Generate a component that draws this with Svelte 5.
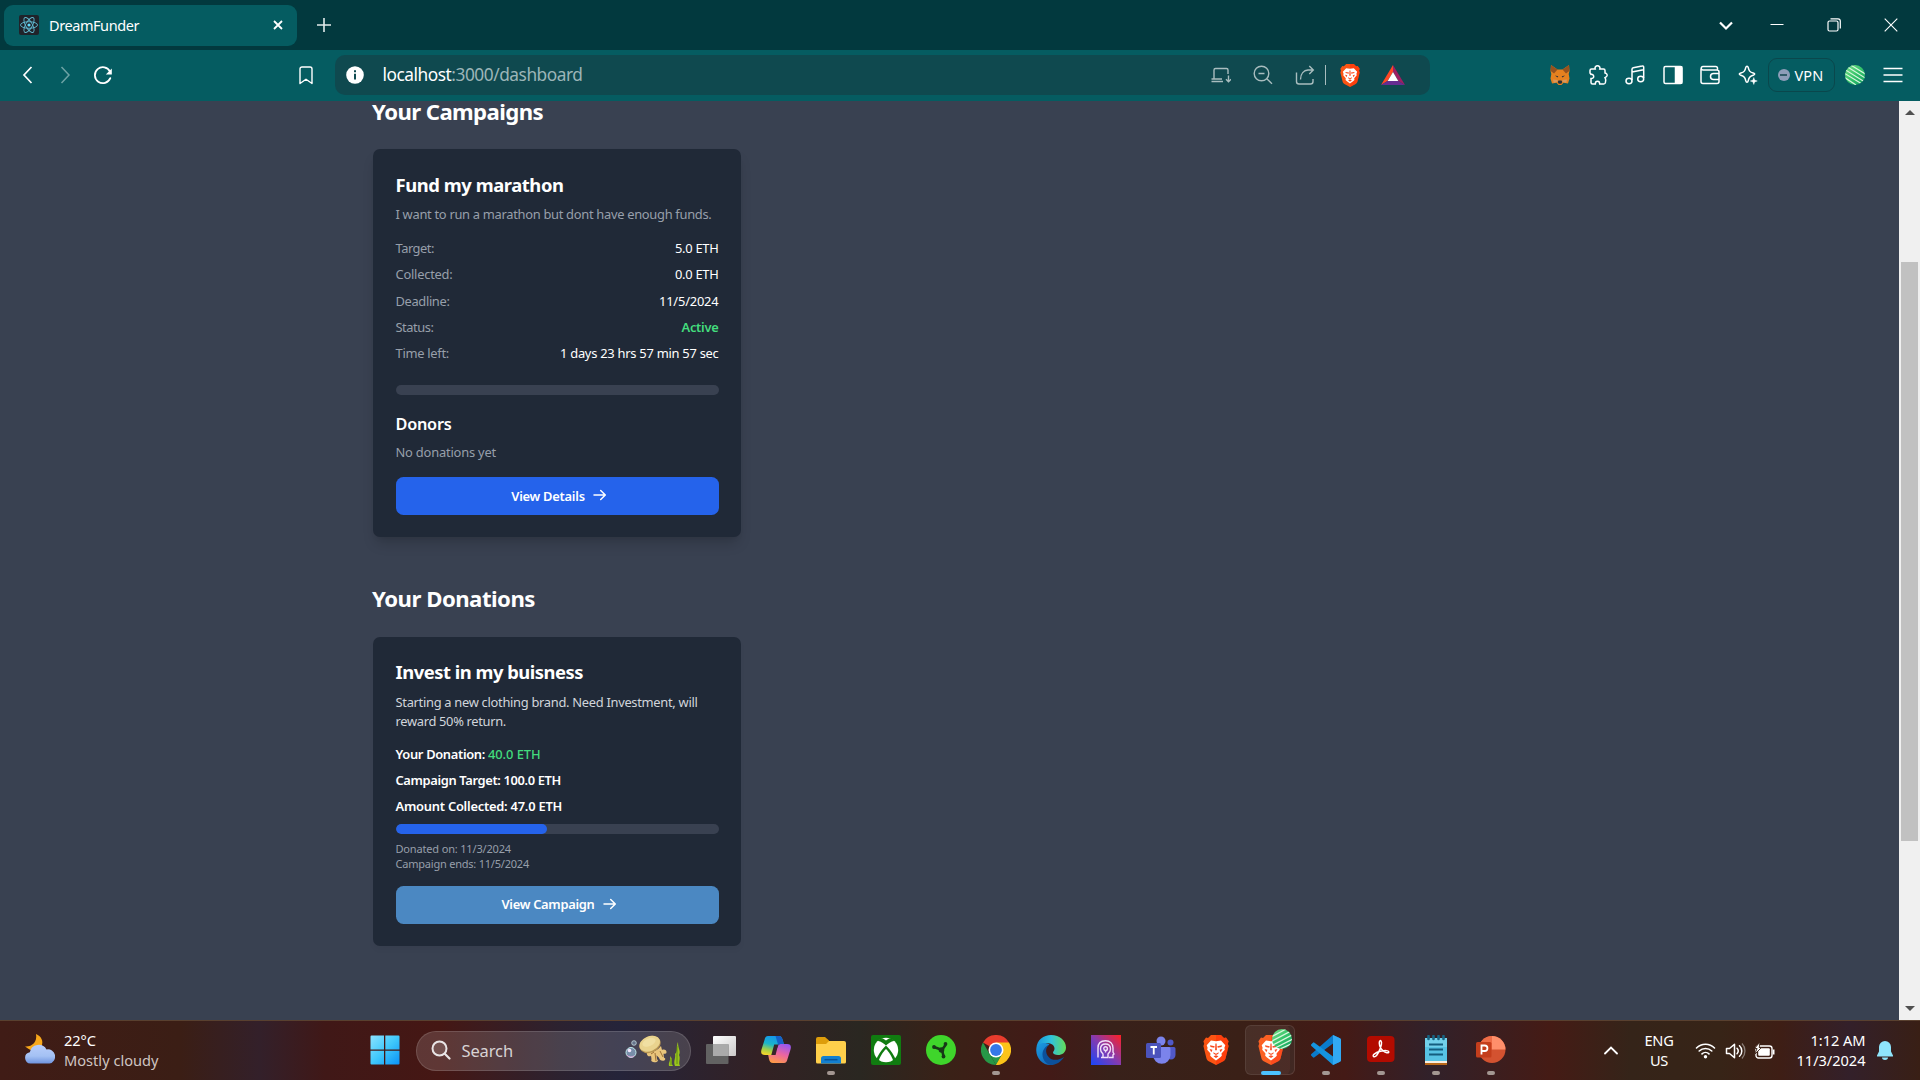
<script>
  const details = [
    { label: 'Target:', lw: 38.5, value: '5.0 ETH', vw: 43.5 },
    { label: 'Collected:', lw: 57, value: '0.0 ETH', vw: 43.5 },
    { label: 'Deadline:', lw: 54, value: '11/5/2024', vw: 59.5 },
    { label: 'Status:', lw: 38, value: 'Active', vw: 37, active: true },
    { label: 'Time left:', lw: 53.5, value: '1 days 23 hrs 57 min 57 sec', vw: 158.5 }
  ];
  const progress = (47 / 100) * 100;

  // Tracks a line of text so that it occupies the given width in pixels.
  function fit(node, width) {
    node.style.letterSpacing = '0px';
    const natural = node.getBoundingClientRect().width;
    const count = node.textContent.length;
    node.style.letterSpacing = `${(width - natural) / count}px`;
  }
</script>

{#snippet brave(cls)}
  <svg class={cls} viewBox="0 0 26 30">
    <path d="M8 0h10l3 3 2-.4 2.6 3.6-.8 2.6.8 2.2-3 12.2c-.4 1.4-1.2 2.2-2.3 3L13 30l-7.3-3.8c-1.1-.8-1.9-1.6-2.3-3L.4 11l.8-2.200L.4 6.200 3 2.600l2 .4z" fill="#fb5413" />
    <path d="M13 0h5l3 3 2-.4 2.600 3.600-.8 2.600.8 2.200-3 12.200c-.4 1.400-1.200 2.200-2.300 3L13 30z" fill="#ff2d0a" opacity=".55" />
    <path d="M8 5.500l5 .8 5-.8 4.300 4.700-.9 2.600.4 2-3.300 3.700.3 2.300-1.800 1.600L13 25.500l-4-3.100-1.800-1.600.3-2.300-3.300-3.700.4-2-.9-2.600z" fill="#fff" />
    <path d="M7 10.300l4.700.9-.5 1.500-3.700-.8zM19 10.300l-4.700.9.5 1.500 3.700-.8zM12.400 8.500h1.200l.3 6.500-.9.600-.9-.6zM10.300 17.200l2.700 1.500 2.700-1.500-.3 1.500-2.400 1.200-2.400-1.200zM6.500 14l3 .7-1.200 2.600zM19.500 14l-3 .7 1.200 2.600zM10.500 21.200l2.500-1 2.500 1-2.500 1.800z" fill="#f9481c" />
  </svg>
{/snippet}

{#snippet profile(cls)}
  <svg class={cls} viewBox="0 0 20 20">
    <defs>
      <linearGradient id="pg-{cls}" x1="0" y1="0" x2="1" y2="1"><stop offset="0" stop-color="#7fe08a" /><stop offset=".5" stop-color="#35c46a" /><stop offset="1" stop-color="#119d62" /></linearGradient>
      <clipPath id="pc-{cls}"><circle cx="10" cy="10" r="10" /></clipPath>
    </defs>
    <g clip-path="url(#pc-{cls})">
      <rect width="20" height="20" fill="url(#pg-{cls})" />
      {#if cls === 'mini'}
        <path d="M-1 8L16-1M-1 12.500L21 1M-1 17L21 5.500M1 20L21 10M6 21l15-7" stroke="#d8f7dd" stroke-width="1.200" />
      {:else}
        <path d="M4-1l18 11M1 1l20 12.500M-1 4l20 12.500M-1 8l18 11M-1 12l12 8" stroke="#d8f7dd" stroke-width="1.200" />
      {/if}
    </g>
  </svg>
{/snippet}

{#snippet arrow()}
  <svg class="arrow" viewBox="0 0 14 12"><path d="M1 6h11.200M7.700 1.500L12.300 6 7.700 10.500" fill="none" stroke="#fff" stroke-width="1.500" stroke-linecap="round" stroke-linejoin="round" /></svg>
{/snippet}

<div class="screen">
  <header class="tabs">
    <div class="tab">
      <svg class="favicon" viewBox="0 0 20 20">
        <rect width="20" height="20" rx="2" fill="#20232a" />
        <g fill="none" stroke="#61bcd3" stroke-width=".9"><ellipse cx="10" cy="10" rx="8.500" ry="3.300" /><ellipse cx="10" cy="10" rx="8.500" ry="3.300" transform="rotate(60 10 10)" /><ellipse cx="10" cy="10" rx="8.500" ry="3.300" transform="rotate(120 10 10)" /></g>
        <circle cx="10" cy="10" r="1.600" fill="#61dafb" />
      </svg>
      <span use:fit={90}>DreamFunder</span>
      <svg class="tab-close" viewBox="0 0 10 10"><path d="M1 1l8 8M9 1L1 9" stroke="#fff" stroke-width="1.800" /></svg>
    </div>
    <svg class="plus" viewBox="0 0 14 14"><path d="M7 0v14M0 7h14" stroke="#e3ecec" stroke-width="1.600" /></svg>
    <div class="window-controls">
      <svg viewBox="0 0 14 14"><path d="M1 4.500l6 6 6-6" fill="none" stroke="#fff" stroke-width="2.200" /></svg>
      <svg viewBox="0 0 14 14"><path d="M.5 6.500h13" stroke="#fff" stroke-width="1" /></svg>
      <svg viewBox="0 0 14 14"><rect x="1" y="3" width="10" height="10" rx="1.500" fill="none" stroke="#fff" stroke-width="1.200" /><path d="M3.500.8H11a2.300 2.300 0 012.300 2.300v7.500" fill="none" stroke="#fff" stroke-width="1.200" /></svg>
      <svg viewBox="0 0 14 14"><path d="M.7.7l12.600 12.600M13.300.7L.7 13.300" stroke="#fff" stroke-width="1.100" /></svg>
    </div>
  </header>

  <nav class="toolbar">
    <div class="history">
      <svg viewBox="0 0 20 20"><path d="M13.500 2L6 10l7.500 8" fill="none" stroke="#fff" stroke-width="1.700" /></svg>
      <svg viewBox="0 0 20 20"><path d="M6.500 2L14 10l-7.500 8" fill="none" stroke="#6ea3a5" stroke-width="1.500" /></svg>
      <svg viewBox="0 0 20 20"><path d="M17.300 13.200A8 8 0 1117 6.500" fill="none" stroke="#fff" stroke-width="1.800" stroke-linecap="round" /><path d="M18.800 3.500v6h-6z" fill="#fff" /></svg>
    </div>
    <svg class="bookmark" viewBox="0 0 14 19"><path d="M3 1h8a2 2 0 012 2v14.500l-6-4.200-6 4.200V3a2 2 0 012-2z" fill="none" stroke="#fff" stroke-width="1.400" stroke-linejoin="round" /></svg>
    <div class="address">
      <svg class="info" viewBox="0 0 18 18"><circle cx="9" cy="9" r="8.800" fill="#fff" /><path d="M9 7.700V13.500M9 4.300v2" stroke="#0f4a50" stroke-width="2" /></svg>
      <span class="url" use:fit={200}>localhost<em>:3000/dashboard</em></span>
      <div class="address-tools">
        <svg class="tool" viewBox="0 0 20 20"><path d="M11 14H3V5a1.500 1.500 0 011.500-1.500h11A1.500 1.500 0 0117 5v4M.5 16.500h11.500M.5 14H3M17.500 10.500v6M15 14.200l2.500 2.500 2.500-2.500" /></svg>
        <svg class="tool" viewBox="0 0 20 20"><circle cx="8.500" cy="8.500" r="7.300" /><path d="M13.800 13.800l5.200 5M5.500 8.500h6" /></svg>
        <svg class="tool" viewBox="0 0 20 20"><path d="M1.500 7.500v9A2.500 2.500 0 004 19h11.500a2.500 2.500 0 002.500-2.500V14M5.500 14.500C5.500 8.500 9 5.300 13 5h5M14.300 1l4 4-4 4" /></svg>
        <i class="divider"></i>
        {@render brave('shield')}
        <svg class="bat" viewBox="0 0 24 20"><path d="M12 0L0 20l6.500-4L12 7z" fill="#ff4724" /><path d="M0 20h24l-6.500-4h-11z" fill="#662d91" /><path d="M12 0l12 20-6.500-4L12 7z" fill="#9e1f63" /><path d="M12 7l5.300 9H6.700z" fill="#fff" /></svg>
      </div>
    </div>
    <div class="extensions">
      <svg viewBox="0 0 20 20"><path d="M1 0l6.500 4.500h5L19 0l.5 6-.8 3 .8 4.500-1.500 5-4.500-.7-2 2.200h-3l-2-2.200-4.500.7-1.500-5 .8-4.500-.8-3z" fill="#e5811f" /><path d="M1 0l6.500 4.500L4 8.500.7 6zM19 0l-6.500 4.500L16 8.500 19.300 6z" fill="#96521f" /><path d="M7.700 17l.8-1.500h3l.8 1.500-1 1.700H8.700z" fill="#26303a" /><path d="M5 10.500l3.300.8-.8 1.300zM15 10.500l-3.300.8.8 1.300z" fill="#30313a" /><path d="M3 14.500l4.500.5.200 2-4 .8zM17 14.500l-4.500.5-.2 2 4 .8z" fill="#c9b09b" opacity=".5" /></svg>
      <svg class="line" viewBox="0 0 20 20"><path d="M3.500 4h3.700c-.6-1.800.6-3.200 2.300-3.200S12.400 2.200 11.800 4h3.700A1.500 1.500 0 0117 5.500V8c1.800.5 2.400 1.500 2 2.800-.4 1.200-1.200 1.500-2 1.800.5 1 .8 1.700.7 2.700l-.3 2.200a1.700 1.700 0 01-1.700 1.500h-4c0-1.800-1-2.700-2.200-2.700S7.300 17.200 7.300 19H4.500A1.500 1.500 0 013 17.500v-4c1.700.2 2.700-.8 2.700-2.100S4.700 9.200 3 9.400L2 8V5.500A1.500 1.500 0 013.500 4z" /></svg>
      <svg class="line" viewBox="0 0 20 20"><path d="M7 15V4.200a1.500 1.500 0 011.200-1.400L17 1a1.300 1.300 0 011.700 1.300V13M7 7l11.500-2.300" /><ellipse cx="4" cy="16" rx="3" ry="2.700" /><ellipse cx="15.700" cy="14" rx="3" ry="2.700" /></svg>
      <svg class="line" viewBox="0 0 20 20"><rect x="1" y="1.500" width="18" height="17" rx="1.500" /><path d="M12.500 2h6v16h-6z" fill="#fff" /></svg>
      <svg class="line" viewBox="0 0 20 20"><path d="M17.500 5V3.300A1.800 1.800 0 0015.700 1.500H3a1.750 1.750 0 000 3.500h14a2 2 0 012 2v9.500a2 2 0 01-2 2H3a2 2 0 01-2-2v-13M19 8.500h-5.500a3 3 0 000 6H19z" /></svg>
      <svg class="line" viewBox="0 0 20 20"><path d="M9 1.200c.7 0 1 .5 1.200 1.200.8 3.500 1.500 4.600 5 5.600 2 .6 2 1.600 0 2.300-3.500 1.200-4.200 2-5 5.600-.4 1.700-2 1.700-2.400 0C7 12.300 6.300 11.500 2.800 10.300c-2-.7-2-1.700 0-2.300 3.500-1 4.200-2.100 5-5.600.2-.7.5-1.200 1.200-1.200z" /><path d="M15.800 12.500l.9 2.600 2.600.9-2.600.9-.9 2.600-.9-2.600-2.600-.9 2.600-.9z" fill="#fff" stroke-width=".4" /></svg>
      <div class="vpn"><i></i><span use:fit={29}>VPN</span></div>
      {@render profile('avatar')}
      <svg class="line menu" viewBox="0 0 20 20"><path d="M.5 3.500h19M.5 10h19M.5 16.500h19" /></svg>
    </div>
  </nav>

  <main class="page">
    <div class="content">
      <h2><span use:fit={171}>Your Campaigns</span></h2>
      <article class="card first">
        <h3><span use:fit={168}>Fund my marathon</span></h3>
        <p class="desc muted"><span use:fit={316}>I want to run a marathon but dont have enough funds.</span></p>
        <dl>
          {#each details as row}
            <div class="row">
              <dt use:fit={row.lw}>{row.label}</dt>
              <dd class:active={row.active} use:fit={row.vw}>{row.value}</dd>
            </div>
          {/each}
        </dl>
        <div class="bar"></div>
        <h4><span use:fit={56}>Donors</span></h4>
        <p class="none muted"><span use:fit={100.500}>No donations yet</span></p>
        <button><span use:fit={73.500}>View Details</span>{@render arrow()}</button>
      </article>

      <h2 class="second"><span use:fit={163}>Your Donations</span></h2>
      <article class="card">
        <h3><span use:fit={187.500}>Invest in my buisness</span></h3>
        <p class="desc light"><span use:fit={302}>Starting a new clothing brand. Need Investment, will</span><br /><span use:fit={110.500}>reward 50% return.</span></p>
        <div class="facts">
          <p><span use:fit={92.500}>Your Donation:&nbsp;</span><b use:fit={52.500}>40.0 ETH</b></p>
          <p><span use:fit={165.500}>Campaign Target: 100.0 ETH</span></p>
          <p><span use:fit={166.500}>Amount Collected: 47.0 ETH</span></p>
        </div>
        <div class="bar"><div class="fill" style="width: {progress}%"></div></div>
        <div class="dates muted">
          <p><span use:fit={115.500}>Donated on: 11/3/2024</span></p>
          <p><span use:fit={133.500}>Campaign ends: 11/5/2024</span></p>
        </div>
        <button class="soft"><span use:fit={93}>View Campaign</span>{@render arrow()}</button>
      </article>
    </div>
    <div class="scrollbar">
      <svg viewBox="0 0 10 5"><path d="M0 5l5-5 5 5z" fill="#505050" /></svg>
      <div class="track"><div class="thumb"></div></div>
      <svg viewBox="0 0 10 5"><path d="M0 0l5 5 5-5z" fill="#505050" /></svg>
    </div>
  </main>

  <footer class="taskbar">
    <div class="weather">
      <svg viewBox="0 0 30 30">
        <defs><linearGradient id="cloud" x1="0" y1="0" x2="0" y2="1"><stop offset="0" stop-color="#b8cdfa" /><stop offset=".6" stop-color="#a4c1f4" /><stop offset="1" stop-color="#6f94df" /></linearGradient></defs>
        <path d="M11 0c5 2 8 7 5.500 12C14 17 8 19 0 12.500 7 13 12.500 8 11 0z" fill="#f8a81b" />
        <path d="M5.500 29.500a5.700 5.700 0 01-.7-11.300A9 9 0 0121.500 15.500a7 7 0 013 14z" fill="url(#cloud)" />
      </svg>
      <div class="lines"><span use:fit={32}>22°C</span><span class="dim" use:fit={94.500}>Mostly cloudy</span></div>
    </div>

    <div class="start">
      <svg viewBox="0 0 30 30"><defs><linearGradient id="win" x1="0" y1="0" x2="1" y2="1"><stop offset="0" stop-color="#8be3ff" /><stop offset=".5" stop-color="#40c8fb" /><stop offset="1" stop-color="#0a92f8" /></linearGradient></defs><path d="M.5 1.500A1 1 0 011.500.5H14v14H.5zM15.300.5h13.200a1 1 0 011 1v13H15.300zM.5 15.800H14v13.700H1.500a1 1 0 01-1-1zM15.300 15.800h14.200v12.700a1 1 0 01-1 1H15.300z" fill="url(#win)" /></svg>
    </div>

    <div class="search">
      <svg class="glass" viewBox="0 0 20 20"><circle cx="8.500" cy="8.500" r="7" fill="#ffffff22" stroke="#e9e5e6" stroke-width="2" /><path d="M13.800 13.800l4.700 4.700" stroke="#e9e5e6" stroke-width="2.200" stroke-linecap="round" /></svg>
      <span use:fit={51.500}>Search</span>
      <svg class="sea" viewBox="0 0 56 32">
        <circle cx="6" cy="18.500" r="5" fill="#788eaa" stroke="#bfe8e8" /><circle cx="4.500" cy="16.500" r="1.800" fill="#f5e8ff" /><path d="M2 21a5 5 0 007 1" stroke="#e4a4d8" fill="none" /><circle cx="9" cy="9" r="2.300" fill="#66738b" stroke="#c4dce0" stroke-width=".8" />
        <path d="M21 17c4 2 8 1 12-2l3-3 1 4c2-1 5 0 4.500 2.500-.3 1.500-2 1.500-3 1.200l.5 4c2 0 1.500 3-.5 3-2.500.3-4-1-4.500-3l-2.500-2.500.5 4c2 1 .5 3-2 3s-4.500-1-3.500-3l-.5-3.500c-1.500 1.500-4.500 0-4-2z" fill="#e9c57c" />
        <path d="M30 19l1 8M35 17l3 6M26 20l3-2" stroke="#9b7036" stroke-width="1" />
        <ellipse cx="25" cy="10.500" rx="11" ry="8.200" transform="rotate(-23 25 10.500)" fill="#b99753" />
        <ellipse cx="24.700" cy="9.700" rx="10.700" ry="7.400" transform="rotate(-23 24.700 9.700)" fill="#e9d38e" />
        <ellipse cx="24" cy="8.300" rx="7" ry="3.800" transform="rotate(-23 24 8.300)" fill="#f0dfa2" />
        <path d="M44 32c-1-4 2-5 1-10 4 4 0 6 3 10zM50 32c-2-5 1-8 0-12 3-2 1-8 3-12 0 7 3 9 1 13 2 4-1 7 1 11z" fill="#9ac51c" /><path d="M52 12v18M46 25v6" stroke="#567e12" stroke-width=".8" />
      </svg>
    </div>

    <div class="apps">
      <div class="app"><svg viewBox="0 0 30 30"><defs><linearGradient id="tv" x2="1" y2="1"><stop stop-color="#fff" /><stop offset="1" stop-color="#cbc9c9" /></linearGradient></defs><rect x="7" y="1" width="23" height="20" rx="1" fill="url(#tv)" /><rect y="9" width="22.500" height="20" rx="1" fill="#626262" /><path d="M7 9h15.500v12H7z" fill="#aaa" /></svg></div>
      <div class="app"><svg viewBox="0 0 30 30">
        <defs><linearGradient id="cp1" x1=".6" y1="0" x2=".3" y2="1"><stop stop-color="#1595ed" /><stop offset=".45" stop-color="#1bb5c9" /><stop offset=".75" stop-color="#a1cf48" /><stop offset="1" stop-color="#f4d52d" /></linearGradient><linearGradient id="cp2" x1=".7" y1="0" x2=".3" y2="1"><stop stop-color="#9857f0" /><stop offset=".5" stop-color="#eb65a1" /><stop offset="1" stop-color="#ff9b47" /></linearGradient></defs>
        <path d="M7 1h11c2.500 0 3.300 2 4 5l.8 3H20c-3 0-4 1.500-4.700 4L13 18c-.5 1.500-1.500 2-3 2H4c-3.500 0-4.500-2-3.500-5.500L3.500 5C4 2.500 5 1 7 1z" fill="url(#cp1)" />
        <path d="M23 28H12c-2.500 0-3.300-1.500-4-4l-.8-4H10c3 0 4-1.500 4.700-4L17 11c.5-1.500 1.500-2 3-2h6c3.500 0 4.500 2 3.500 5.500L26.500 24c-.6 2.500-1.500 4-3.500 4z" fill="url(#cp2)" />
        <path d="M14.500 1H18c2.500 0 3.300 2 4 5l.8 3H20c-1 0-2 .3-2.800.9z" fill="#1561c7" />
        <path d="M13.200 9.500h4l-2.600 10.500h-4.300z" fill="#38242a" />
      </svg></div>
      <div class="app running"><svg viewBox="0 0 30 30"><path d="M0 4a2 2 0 012-2h7l4 3.500V10H0z" fill="#dd9d0b" /><path d="M0 9h10l3-3h15a2 2 0 012 2v19a1.500 1.500 0 01-1.500 1.500h-27A1.500 1.500 0 010 27z" fill="#ffd04b" /><path d="M5 28.500v-5a2.500 2.500 0 012.500-2.500h15a2.500 2.500 0 012.500 2.500v5z" fill="#1380d0" /><path d="M8.500 24.700h13" stroke="#08549a" stroke-width="1.500" /></svg></div>
      <div class="app"><svg viewBox="0 0 30 30"><rect width="30" height="30" rx="2" fill="#107c10" /><circle cx="15" cy="15" r="12.200" fill="#fff" /><path d="M6.500 6C11 5 21 15 25 25l-2.500 1.500C20 19 16 15 15 14c-1 1-5 5-7.500 12.500L5 25C9 15 19 5 23.500 6L21 3.500c-3-.8-5 1.500-6 2-1-.5-3-2.800-6-2z" fill="#107c10" /></svg></div>
      <div class="app"><svg viewBox="0 0 30 30"><circle cx="15" cy="15" r="15" fill="#3fd52b" /><path d="M8 12l8 3 3.500-5M16 15l1.500 6" stroke="#173817" stroke-width="2.600" fill="none" /><circle cx="8" cy="12" r="1.900" fill="#173817" /><circle cx="19.500" cy="9" r="1.900" fill="#173817" /><circle cx="17.500" cy="21.500" r="1.900" fill="#173817" /><circle cx="15.500" cy="15" r="2.800" fill="#173817" /></svg></div>
      <div class="app running"><svg viewBox="0 0 30 30"><path d="M15 15L2 7.500A15 15 0 0128 7.500z" fill="#e83c2d" /><path d="M15 7.500h13A15 15 0 0115 30l6.500-11.200z" fill="#fcc419" /><path d="M2 7.500l6.500 11.200L15 30A15 15 0 012 7.500z" fill="#279847" /><path d="M8.500 18.700h13L15 30z" fill="#279847" /><path d="M21.500 18.700L15 30c2 0 5-.5 7-2z" fill="#fcc419" /><circle cx="15" cy="15" r="7.500" fill="#fff" /><circle cx="15" cy="15" r="5.900" fill="#3578e8" /></svg></div>
      <div class="app"><svg viewBox="0 0 30 30"><defs><linearGradient id="ed1" x1="0" x2="1"><stop stop-color="#1794dc" /><stop offset=".5" stop-color="#31c3db" /><stop offset="1" stop-color="#64dc58" /></linearGradient><linearGradient id="ed2" x1="0" y1="0" x2=".7" y2="1"><stop stop-color="#1b9de2" /><stop offset="1" stop-color="#1266b9" /></linearGradient></defs><path d="M.4 13C1 5 7.500 0 15 0c9 0 15 6 15 12.500 0 5-4 7.500-8 7.500-3 0-5-1-5-2.500 0-1 1.500-1.500 1.500-4C18.500 9 13 7.500 9 8.500 4 9.500 1 12 .4 13z" fill="url(#ed1)" /><path d="M.4 13C2 8 9 6.500 13.500 9.500 8 12 8 20 12 25c1.500 2 4 3.500 6 4.500-10 2.500-19-6-17.600-16.500z" fill="url(#ed2)" /><path d="M13.500 9.700c-4 2.300-4.500 8-1 12 3.500 4.300 10 4 15.500.3C25 27 20 30 14.500 30 7 28 5.500 20 7 16c1-3 3.500-5.500 6.500-6.300z" fill="#0c509b" /></svg></div>
      <div class="app"><svg viewBox="0 0 30 30"><defs><linearGradient id="pr" x1="0" y1="1" x2="1" y2="0"><stop stop-color="#1747fa" /><stop offset=".5" stop-color="#853bb0" /><stop offset="1" stop-color="#ff2023" /></linearGradient></defs><rect width="30" height="30" fill="url(#pr)" /><g fill="none" stroke="#f2dff9" stroke-width="1.400"><path d="M7 22.500V13c0-5 3-7.300 7.500-7.300S22 8.500 22 13v4l1 2-1 .8v2.700h-4" /><path d="M10 22.500h7v-3.500c2-1.500 2.500-3 2.500-5 0-3-2-5-5-5s-5 2-5 5c0 2 .5 3.500 2.500 5v3" /><path d="M14.500 17.500v-2c-2 0-2.500-3.700 0-3.700s2.500 3.700 0 3.700" /></g></svg></div>
      <div class="app"><svg viewBox="0 0 30 30"><circle cx="24.500" cy="7.500" r="3" fill="#5059c9" /><path d="M20 12h8a1.500 1.500 0 011.500 1.500V20a4.500 4.500 0 01-9 0z" fill="#5059c9" /><circle cx="15" cy="6" r="4.500" fill="#7b83eb" /><path d="M7 12h16a1.500 1.500 0 011.500 1.500V20A8.500 8.500 0 017 20z" fill="#7b83eb" /><rect y="8" width="15" height="15" rx="1.500" fill="#4b53bc" /><path d="M4.500 12h6.500M7.750 12v7.500" stroke="#fff" stroke-width="1.800" /></svg></div>
      <div class="app">{@render brave('lion')}</div>
      <div class="app current">{@render brave('lion')}<div class="badge">{@render profile('mini')}</div></div>
      <div class="app running"><svg viewBox="0 0 30 30"><path d="M22 0l7 3.200a2 2 0 011 1.700v20.200a2 2 0 01-1 1.700L22 30V8.500L3.500 22.300a1.200 1.200 0 01-1.600 0L.4 20.800a1.200 1.200 0 010-1.700z" fill="#0a7bcc" /><path d="M22 30L.4 10.900a1.200 1.200 0 010-1.700l1.500-1.500a1.200 1.200 0 011.600 0L22 21.500z" fill="#1594df" /><path d="M22 0l7 3.200a2 2 0 011 1.700v20.200a2 2 0 01-1 1.700L22 30z" fill="#32a9f3" /></svg></div>
      <div class="app running"><svg viewBox="0 0 30 30"><rect x="1" y="1" width="27.500" height="26" rx="4" fill="#b30b00" /><path d="M7.500 21.500c-1.500-1.500 2-4 7-5.200s8-.8 8.300.6c.2 1.600-3.600 1-6.300-1.600S12.700 8.500 13.500 6.500s2.500-.5 1.900 2.800c-.7 4.700-5.400 14.500-7.900 12.200z" fill="none" stroke="#fff" stroke-width="1.500" /></svg></div>
      <div class="app running"><svg viewBox="0 0 30 30"><path d="M4 3h22v24H4z" fill="#57c3e4" /><path d="M4 3h22v9H4z" fill="#83d9ef" opacity=".6" /><path d="M4 26h22v2H4z" fill="#f6eee2" /><path d="M4 28h22v2H4z" fill="#b8681a" /><path d="M8 9.500h14M8 14.500h14M8 19.500h14" stroke="#145d7e" stroke-width="1.800" /><path d="M7.500 1v3M12.500 1v3M17.500 1v3M22.500 1v3" stroke="#176584" stroke-width="2.600" stroke-linecap="round" /></svg></div>
      <div class="app running"><svg viewBox="0 0 30 30"><circle cx="16" cy="14.500" r="13.500" fill="#d35230" /><path d="M16 1a13.500 13.500 0 00-13.500 13.500H16z" fill="#ed6c47" /><path d="M16 1a13.500 13.500 0 0113.500 13.500H16z" fill="#ff8f6b" /><rect x="0" y="7" width="15.500" height="15.500" rx="1.500" fill="#c43e1c" /><path d="M5.500 19.500v-9h3.200a2.700 2.700 0 010 5.500H5.500" fill="none" stroke="#fff" stroke-width="1.800" /></svg></div>
    </div>

    <div class="tray">
      <svg class="up" viewBox="0 0 14 9"><path d="M1 7.500l6-6 6 6" fill="none" stroke="#fff" stroke-width="1.800" stroke-linecap="round" /></svg>
      <div class="lines lang"><span use:fit={29}>ENG</span><span use:fit={18}>US</span></div>
      <svg class="status" viewBox="0 0 20 18"><g fill="none" stroke="#fff" stroke-width="1.600" stroke-linecap="round"><path d="M1 6a12.700 12.700 0 0118 0M3.700 9a9 9 0 0112.600 0M6.500 11.900a5 5 0 017 0" /></g><circle cx="10" cy="14.800" r="1.700" fill="#fff" /></svg>
      <svg class="status" viewBox="0 0 20 18"><path d="M1 6.500h3L9 2.200v13.600L4 11.500H1zM11.500 6.300a4 4 0 010 5.400M14 3.800a7 7 0 010 10.400" fill="none" stroke="#fff" stroke-width="1.500" stroke-linejoin="round" stroke-linecap="round" /><path d="M16.500 1.500a11 11 0 010 15" fill="none" stroke="#8a7d76" stroke-width="1.300" /></svg>
      <svg class="status" viewBox="0 0 20 18"><rect x="1.500" y="4" width="16" height="12" rx="2.500" fill="none" stroke="#fff" stroke-width="1.400" /><rect x="3.700" y="6.200" width="11.600" height="7.600" rx="1" fill="#fff" /><path d="M18.200 7.500h1.800v5h-1.800z" fill="#fff" /><path d="M5.500 0L0 6.500h2.600L0 12.500l7-7H4.700z" fill="#fff" stroke="#3a2015" stroke-width=".9" /></svg>
      <div class="lines clock"><span use:fit={55}>1:12 AM</span><span use:fit={69}>11/3/2024</span></div>
      <svg class="bell" viewBox="0 0 16 19"><path d="M8 0a6 6 0 016 6v4.500l2 4c.2.500 0 1-.6 1H.6c-.6 0-.8-.5-.6-1l2-4V6a6 6 0 016-6zM5 16.600h6A3 2.400 0 015 16.600z" fill="#8fe5fc" /></svg>
    </div>
  </footer>
</div>

<style>
  :global(body) { margin: 0; overflow: hidden; }
  * { box-sizing: border-box; }
  h2, h3, h4, p, dl, dt, dd { margin: 0; }
  svg { display: block; flex: none; }
  span { white-space: nowrap; }
  .screen {
    width: 1920px; height: 1080px; display: flex; flex-direction: column; overflow: hidden;
    font-family: "Segoe UI", "Noto Sans", "Open Sans", sans-serif; color: #fff;
  }

  .tabs { height: 50px; flex: none; background: #02393e; display: flex; align-items: center; padding: 0 22px 0 4px; }
  .tab { width: 293px; height: 41px; border-radius: 9px; background: #055c61; display: flex; align-items: center; padding: 0 14.500px 0 15px; font-size: 14.500px; }
  .favicon { width: 20px; height: 20px; margin-right: 10px; }
  .tab-close { width: 10px; height: 10px; margin-left: auto; }
  .plus { width: 14px; height: 14px; margin-left: 20px; }
  .window-controls { margin-left: auto; display: flex; gap: 42.500px; }
  .window-controls svg { width: 14px; height: 14px; }
  .window-controls svg:first-child { margin-right: -5.500px; }
  .window-controls svg:last-child { margin-left: 1px; }

  .toolbar { height: 51px; flex: none; background: #055c61; display: flex; align-items: center; padding: 0 17.500px 1px 17.500px; }
  .history { display: flex; gap: 17.500px; }
  .history svg { width: 20px; height: 20px; }
  .bookmark { width: 14px; height: 19px; margin-left: 186.500px; }
  .address { width: 1095px; height: 40px; margin-left: 22px; border-radius: 10px; background: #0f494f; display: flex; align-items: center; padding: 0 25px 0 11px; }
  .info { width: 18px; height: 18px; }
  .url { margin-left: 18.500px; font-size: 17.300px; line-height: 24px; }
  .url em { font-style: normal; color: #9cb5b8; }
  .address-tools { margin-left: auto; display: flex; align-items: center; }
  .tool { width: 20px; height: 20px; margin-right: 22px; fill: none; stroke: #a9bdbf; stroke-width: 1.400; }
  .address-tools .tool:nth-child(3) { margin-right: 10px; }
  .divider { width: 1px; height: 20px; background: #a9bdbf; margin-right: 14px; }
  .address-tools :global(.shield) { width: 20px; height: 23px; margin-right: 21px; }
  .bat { width: 24px; height: 20px; }
  .extensions { margin-left: auto; display: flex; align-items: center; gap: 17.500px; }
  .extensions svg { width: 20px; height: 20px; }
  .line { fill: none; stroke: #fff; stroke-width: 1.500; }
  .vpn { width: 67px; height: 34px; margin: 0 -7px 0 -7.500px; border: 1px solid #0a474c; border-radius: 9px; display: flex; align-items: center; gap: 5px; padding-left: 9px; font-size: 14.500px; }
  .vpn i { width: 12px; height: 12px; border-radius: 50%; background: #8d9db8; display: grid; place-items: center; }
  .vpn i::after { content: ""; width: 7px; height: 2px; background: #315b68; }

  .page { flex: 1; min-height: 0; background: #394151; display: flex; justify-content: space-between; }
  .content { padding: 0 0 0 372px; width: 742px; }
  h2 { font-size: 22.200px; font-weight: 700; line-height: 30px; height: 26px; margin: -4px 0 26px; }
  h2.second { margin: 47.500px 0 26.500px; }
  .card { width: 368px; margin-left: 1px; padding: 22.500px; border-radius: 7px; background: #202937; box-shadow: 0 4px 6px -1px #0000000c; }
  .card.first { box-shadow: 0 9px 14px -3px #0000002a, 0 4px 6px -4px #0000001a; }
  h3 { font-size: 18.400px; font-weight: 700; line-height: 26.250px; margin-bottom: 7.500px; }
  .desc { font-size: 12.900px; line-height: 18.750px; margin-bottom: 15px; }
  .muted { color: #979faa; }
  .light { color: #d1d5db; }
  dl { display: flex; flex-direction: column; gap: 7.500px; margin-bottom: 22.500px; }
  .row { display: flex; justify-content: space-between; font-size: 12.900px; line-height: 18.750px; white-space: nowrap; }
  dt { color: #979faa; }
  dd { color: #fff; }
  dd.active { color: #43dc7d; font-weight: 600; }
  .bar { height: 9.375px; border-radius: 5px; background: #394151; overflow: hidden; }
  .fill { height: 100%; border-radius: 5px; background: #2563eb; }
  h4 { font-size: 16.300px; font-weight: 600; line-height: 26.250px; margin: 16px 0 6.200px; }
  .none { font-size: 12.900px; line-height: 18.750px; margin-bottom: 15px; }
  button { width: 100%; height: 38px; margin-bottom: -.5px; border: 0; border-radius: 7.500px; background: #2563eb; color: #fff; font: 600 12.900px "Segoe UI", "Noto Sans", sans-serif; display: flex; align-items: center; justify-content: center; padding: 0 0 0 4px; }
  button.soft { background: #4b88c2; margin-top: -.4px; padding-bottom: 1px; }
  .arrow { width: 14px; height: 12px; margin-left: 8px; margin-top: -1px; }
  .facts { display: flex; flex-direction: column; gap: 7.500px; margin: -.7px 0 8.200px; font-size: 12.900px; line-height: 18.750px; font-weight: 600; }
  .facts b { color: #43dc7d; font-weight: 500; }
  .dates { margin: 7.500px 0 15px; font-size: 11px; line-height: 15px; }

  .scrollbar { width: 21px; background: #f0f0f0; display: flex; flex-direction: column; align-items: center; padding: 9px 0 9px; }
  .scrollbar svg { width: 10px; height: 5px; }
  .track { flex: 1; width: 17px; padding-top: 147px; }
  .thumb { height: 579px; background: #c1c1c1; }

  .taskbar {
    height: 60px; flex: none; display: flex; align-items: center; border-top: 1px solid #59402f; padding: 0 27px 0 25px;
    background: linear-gradient(90deg, #401c16 0, #3b1e15 180px, #33202a 260px, #401817 325px, #451714 440px, #2c2230 560px, #25243a 620px, #332124 760px, #2a2721 860px, #3a2117 950px, #421a17 1050px, #38211a 1110px, #3a2017 1240px, #441a16 1345px, #31212a 1430px, #451b15 1550px, #352419 1630px, #372417 1720px, #3e1e15 1780px, #33202a 1850px, #391f15 1920px);
  }
  .weather { width: 332.500px; display: flex; gap: 9px; align-items: center; }
  .weather svg { width: 30px; height: 30px; margin-top: -3px; }
  .lines { display: flex; flex-direction: column; font-size: 14.600px; line-height: 20px; margin-top: -2px; align-items: flex-start; }
  .dim { color: #cfc5c2; }
  .start { width: 55px; display: grid; place-items: center; padding-bottom: 1px; }
  .start svg { width: 30px; height: 30px; }
  .search { width: 275px; height: 40px; margin: 0 2.500px 0 3px; border-radius: 20px; border: 1px solid #ffffff22; background: #ffffff24; display: flex; align-items: center; padding: 0 9px 1px 14px; font-size: 16.500px; color: #d8d3d4; }
  .glass { width: 20px; height: 20px; margin-right: 11px; }
  .sea { width: 56px; height: 32px; margin-left: auto; }
  .apps { display: flex; height: 59px; }
  .app { width: 55px; position: relative; display: grid; place-items: center; padding-bottom: 1px; }
  .app > svg { width: 30px; height: 30px; }
  .app > :global(.lion) { width: 26px; height: 30px; }
  .running::after, .current::after { content: ""; position: absolute; bottom: 5px; left: 23.500px; width: 8px; height: 4px; border-radius: 2px; background: #a39792; }
  .current::after { left: 17.500px; width: 20px; background: #4cc2ff; }
  .current::before { content: ""; position: absolute; inset: 4px 3px 5px 2px; border-radius: 6px; background: #ffffff12; border: 1px solid #ffffff14; box-shadow: inset -5px 0 0 -1px #2b1d1a55; }
  .badge { position: absolute; left: 28.500px; top: 8px; }
  .badge :global(.mini) { width: 20px; height: 20px; }
  .tray { margin-left: auto; display: flex; align-items: center; }
  .up { width: 14px; height: 9px; margin-right: 27px; }
  .lang { align-items: center; margin-right: 21.500px; }
  .status { width: 21px; height: 18px; margin-right: 8.500px; }
  .clock { align-items: flex-end; margin: -2px 11.500px 0 13px; }
  .bell { width: 16px; height: 19px; }
</style>
